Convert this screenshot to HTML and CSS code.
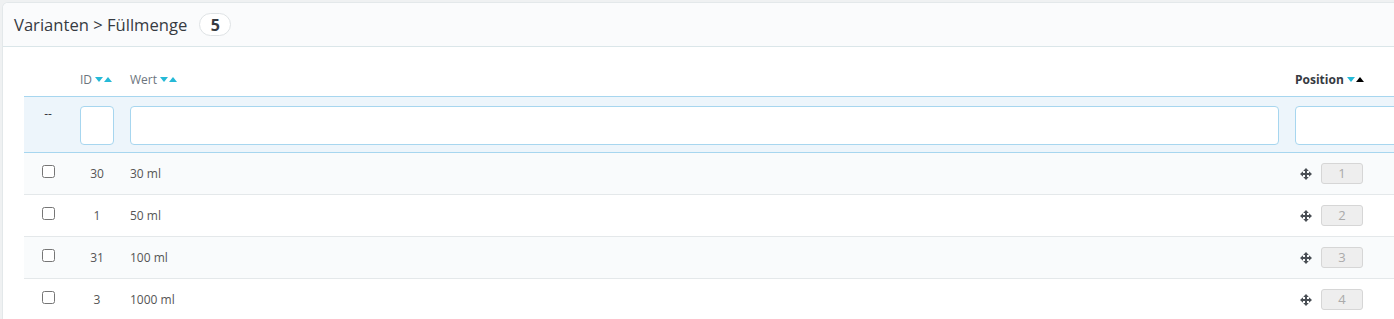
FILE: index.html
```html
<!DOCTYPE html>
<html lang="de">
<head>
    <meta charset="UTF-8">
    <title>Varianten &gt; Füllmenge</title>
    <link rel="stylesheet" href="styles.css">
</head>
<body>
    <div class="panel">
        <div class="panel-heading">
            Varianten &gt; Füllmenge
            <span class="badge">5</span>
        </div>
        <div class="panel-body">
            <table class="grid">
                <colgroup>
                    <col class="col-check">
                    <col class="col-id">
                    <col class="col-value">
                    <col class="col-pos">
                </colgroup>
                <thead>
                    <tr class="nodrag">
                        <th></th>
                        <th>ID <span class="sort"><i class="down"></i><i class="up"></i></span></th>
                        <th>Wert <span class="sort"><i class="down"></i><i class="up"></i></span></th>
                        <th class="bold">Position <span class="sort"><i class="down"></i><i class="up active"></i></span></th>
                    </tr>
                    <tr class="filter">
                        <th class="dash"><span>--</span></th>
                        <th><input type="text" class="filter-input"></th>
                        <th><input type="text" class="filter-input"></th>
                        <th><input type="text" class="filter-input"></th>
                    </tr>
                </thead>
                <tbody>
                    <tr class="odd">
                        <td class="check"><input type="checkbox"></td>
                        <td class="center">30</td>
                        <td>30 ml</td>
                        <td class="pos"><svg class="move" viewBox="0 0 12 12" width="12" height="12"><path d="M6 0L3.2 3H5V5H3V3.2L0 6L3 8.8V7H5V9H3.2L6 12L8.8 9H7V7H9V8.8L12 6L9 3.2V5H7V3H8.8Z"/></svg><span class="posbox">1</span></td>
                    </tr>
                    <tr>
                        <td class="check"><input type="checkbox"></td>
                        <td class="center">1</td>
                        <td>50 ml</td>
                        <td class="pos"><svg class="move" viewBox="0 0 12 12" width="12" height="12"><path d="M6 0L3.2 3H5V5H3V3.2L0 6L3 8.8V7H5V9H3.2L6 12L8.8 9H7V7H9V8.8L12 6L9 3.2V5H7V3H8.8Z"/></svg><span class="posbox">2</span></td>
                    </tr>
                    <tr class="odd">
                        <td class="check"><input type="checkbox"></td>
                        <td class="center">31</td>
                        <td>100 ml</td>
                        <td class="pos"><svg class="move" viewBox="0 0 12 12" width="12" height="12"><path d="M6 0L3.2 3H5V5H3V3.2L0 6L3 8.8V7H5V9H3.2L6 12L8.8 9H7V7H9V8.8L12 6L9 3.2V5H7V3H8.8Z"/></svg><span class="posbox">3</span></td>
                    </tr>
                    <tr>
                        <td class="check"><input type="checkbox"></td>
                        <td class="center">3</td>
                        <td>1000 ml</td>
                        <td class="pos"><svg class="move" viewBox="0 0 12 12" width="12" height="12"><path d="M6 0L3.2 3H5V5H3V3.2L0 6L3 8.8V7H5V9H3.2L6 12L8.8 9H7V7H9V8.8L12 6L9 3.2V5H7V3H8.8Z"/></svg><span class="posbox">4</span></td>
                    </tr>
                </tbody>
            </table>
        </div>
    </div>
</body>
</html>
```
FILE: styles.css
```css
body {
    margin: 0;
    padding: 3px 0 0 3px;
    background: #eff1f2;
    font: 12px "Open Sans", "Liberation Sans", sans-serif;
    color: #555;
    overflow: hidden;
}
.panel {
    width: 1460px;
    background: #fff;
    border-radius: 5px 0 0 0;
    box-shadow: 0 0 0 1px #e3e8ea;
}
.panel-heading {
    height: 43px;
    display: flex;
    align-items: center;
    padding-left: 11px;
    background: #fafbfc;
    border-bottom: 1px solid #dbe6e9;
    border-radius: 5px 0 0 0;
    font-size: 16.6px;
    color: #363a41;
}
.badge {
    display: inline-flex;
    align-items: center;
    justify-content: center;
    margin-left: 12px;
    width: 32px;
    height: 23px;
    box-sizing: border-box;
    border: 1px solid #dfe3e5;
    border-radius: 12px;
    background: #fff;
    font-weight: 700;
    font-size: 16px;
    color: #363a41;
}
.panel-body {
    padding: 13px 0 0 21px;
}
.grid {
    width: 100%;
    border-collapse: collapse;
    table-layout: fixed;
}
.col-check { width: 48px; }
.col-id { width: 50px; }
.col-value { width: 1165px; }
.grid th, .grid td {
    padding: 0 8px;
    text-align: left;
}
.nodrag th {
    height: 34px;
    padding-top: 2px;
    font-weight: 400;
    font-size: 12px;
    color: #6c757d;
    vertical-align: middle;
}
.nodrag th.bold {
    font-weight: 700;
    color: #363a41;
}
.sort i {
    display: inline-block;
    width: 0;
    height: 0;
    border-left: 4px solid transparent;
    border-right: 4px solid transparent;
    vertical-align: middle;
    margin-top: -2px;
}
.sort .down {
    border-top: 5px solid #25b9d7;
}
.sort .up {
    border-bottom: 5px solid #25b9d7;
    margin-left: 1px;
}
.sort .up.active {
    border-bottom-color: #000;
}
.filter th {
    height: 55px;
    background: #edf5fb;
    border-top: 1px solid #a7d6ef;
    border-bottom: 1px solid #a7d6ef;
    vertical-align: middle;
}
.filter th.dash {
    text-align: center;
    vertical-align: top;
    font-weight: 400;
    color: #363a41;
}
.filter th.dash span {
    display: block;
    margin-top: 8px;
}
.filter-input {
    display: block;
    width: 100%;
    height: 39px;
    box-sizing: border-box;
    border: 1px solid #a7d6ef;
    border-radius: 4px;
    background: #fff;
    margin-top: 1px;
}
tbody td {
    height: 41px;
    border-bottom: 1px solid #e4e8ea;
    vertical-align: middle;
    color: #555;
}
tbody tr.odd td {
    background: #f9fbfc;
}
td.center {
    text-align: center;
}
td.check input {
    display: block;
    margin: 0 auto 5px;
    width: 13px;
    height: 13px;
}
td.pos {
    padding-left: 13px;
    white-space: nowrap;
}
.move {
    fill: #4a4f55;
    vertical-align: middle;
}
.posbox {
    display: inline-block;
    vertical-align: middle;
    margin-left: 9px;
    width: 42px;
    height: 21px;
    box-sizing: border-box;
    border: 1px solid #d6d6d6;
    border-radius: 3px;
    background: #eee;
    color: #aaa;
    font-size: 13px;
    line-height: 19px;
    text-align: center;
}
```
